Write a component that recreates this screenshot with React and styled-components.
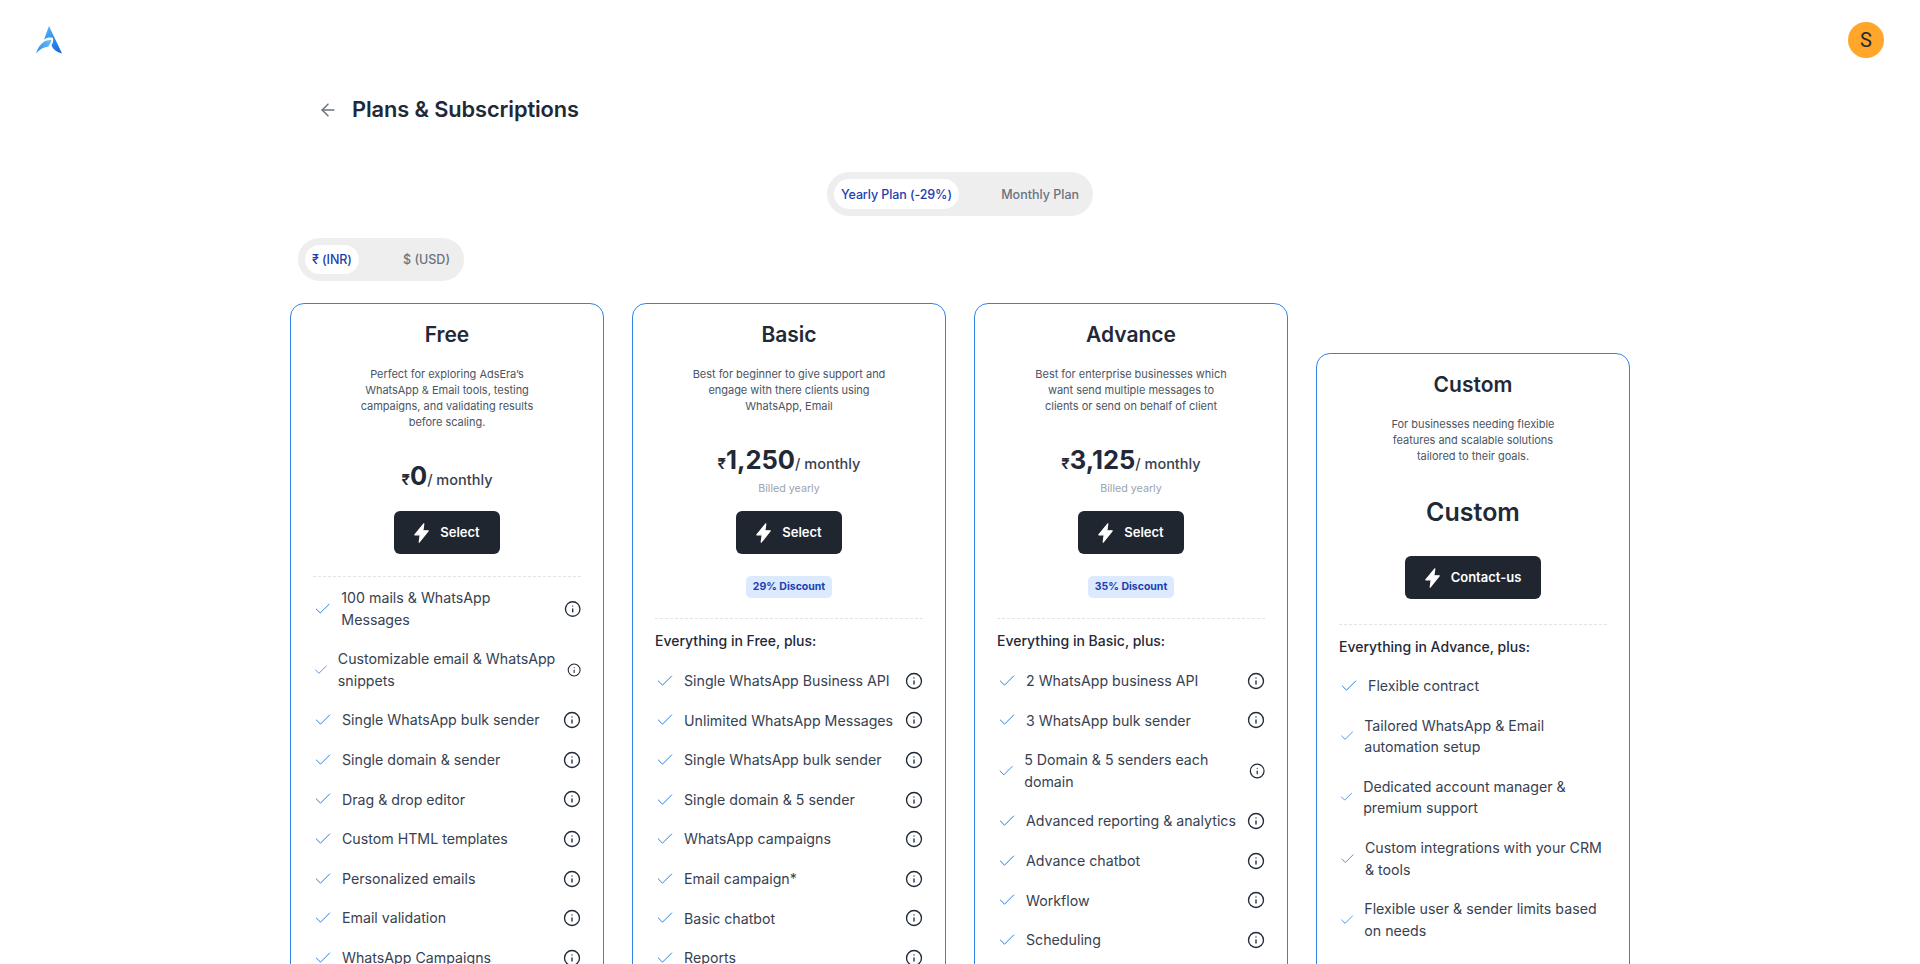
import styled, { createGlobalStyle } from 'styled-components';
import { ArrowLeft, Check, Info } from 'lucide-react';

const GlobalStyle = createGlobalStyle`
  html, body {
    margin: 0;
    height: 964px;
    overflow: hidden;
    background: #fff;
    font-family: Inter, "Noto Sans", sans-serif;
    color: #1f2937;
  }
  * { box-sizing: border-box; }
`;

const Header = styled.header`
  display: flex;
  justify-content: space-between;
  align-items: center;
  height: 80px;
  padding: 0 36px;
`;

const Avatar = styled.div`
  width: 36px;
  height: 36px;
  border-radius: 50%;
  background: #ffa62b;
  display: flex;
  align-items: center;
  justify-content: center;
  font-family: Roboto, sans-serif;
  font-size: 20px;
  color: #1f2937;
`;

const Main = styled.main`
  width: 1340px;
  margin: 0 auto;
`;

const TitleRow = styled.div`
  display: flex;
  align-items: center;
  gap: 14px;
  height: 33px;
  margin-top: 13px;
  padding-left: 28px;
  color: #6b7280;
`;

const Title = styled.h1`
  margin: 0;
  font-size: 21.8px;
  line-height: 33px;
  font-weight: 600;
  letter-spacing: -0.1px;
  color: #1f2937;
`;

const PlanToggleRow = styled.div`
  display: flex;
  justify-content: center;
  margin-top: 46px;
`;

const Toggle = styled.div`
  display: flex;
  align-items: center;
  justify-content: space-between;
  width: ${(p) => p.$width}px;
  height: ${(p) => p.$height}px;
  padding: 0 7px;
  border-radius: 22px;
  background: #eeeeee;
  margin-left: ${(p) => p.$left || 0}px;
`;

const ToggleOption = styled.div`
  display: flex;
  align-items: center;
  height: ${(p) => p.$height}px;
  padding: 0 7px;
  border-radius: 16px;
  font-size: 12.5px;
  font-weight: 500;
  letter-spacing: ${(p) => (p.$active ? '-0.1px' : '0')};
  background: ${(p) => (p.$active ? '#fff' : 'transparent')};
  color: ${(p) => (p.$active ? '#1e40af' : '#6b7280')};
`;

const CurrencyRow = styled.div`
  margin-top: 22px;
`;

const Cards = styled.div`
  display: grid;
  grid-template-columns: repeat(4, 314px);
  gap: 28px;
  align-items: start;
  margin-top: 22px;
`;

const Card = styled.section`
  min-height: 760px;
  margin-top: ${(p) => (p.$lowered ? 50 : 0)}px;
  padding: 16px 22px 24px;
  border: 1px solid #2f84e4;
  border-radius: 14px;
  background: #fff;
`;

const PlanName = styled.h2`
  margin: 0;
  font-size: 21px;
  line-height: 30px;
  font-weight: 600;
  text-align: center;
  color: #1f2937;
`;

const Description = styled.p`
  margin: 16px 0 25px;
  font-size: 11px;
  letter-spacing: -0.03px;
  line-height: 16px;
  text-align: center;
  color: #4b5563;
`;

const Price = styled.div`
  display: flex;
  justify-content: center;
  align-items: baseline;
  height: 42px;
  line-height: 42px;
  font-weight: 500;
  font-size: 14.5px;
  color: #374151;
`;

const Rupee = styled.span`
  font-size: 15px;
  font-weight: 600;
  color: #1f2937;
`;

const Amount = styled.span`
  font-size: 25.5px;
  font-weight: 700;
  color: #1f2937;
`;

const CustomPrice = styled.div`
  padding-top: 2px;
  font-size: 25px;
  line-height: 42px;
  font-weight: 600;
  text-align: center;
  color: #1f2937;
`;

const Billed = styled.div`
  height: 16px;
  font-size: 10.7px;
  line-height: 16px;
  text-align: center;
  color: #9ca3af;
`;

const ButtonRow = styled.div`
  display: flex;
  justify-content: center;
  margin-top: ${(p) => p.$top}px;
`;

const SelectButton = styled.button`
  display: flex;
  align-items: center;
  gap: 11px;
  height: 43px;
  padding: 0 20px 2px;
  border: none;
  border-radius: 6px;
  background: #1f2630;
  color: #fff;
  font-family: inherit;
  font-size: 13px;
  font-weight: 600;

  svg {
    margin-top: 2px;
  }
`;

const Badge = styled.div`
  width: fit-content;
  height: 22px;
  margin: 22px auto 0;
  padding: 0 7px;
  border-radius: 5px;
  background: #dbeafe;
  color: #1e40af;
  font-size: 10.5px;
  font-weight: 700;
  line-height: 22px;
`;

const Divider = styled.hr`
  margin: ${(p) => p.$top}px 0 0;
  border: none;
  border-top: 1px dashed #e2e4e8;
`;

const IncludesTitle = styled.div`
  margin-top: 11px;
  font-size: 14px;
  line-height: 22px;
  font-weight: 500;
  color: #1f2937;
`;

const FeatureList = styled.ul`
  display: flex;
  flex-direction: column;
  gap: 18px;
  margin: ${(p) => p.$top}px 0 0;
  padding: 0;
  list-style: none;
`;

const Feature = styled.li`
  display: flex;
  align-items: center;
  justify-content: space-between;
`;

const CheckMark = styled(Check)`
  flex: 0 1 20px;
  min-width: 0;
  margin-right: 9px;
  color: #1f7ae0;
`;

const FeatureText = styled.span`
  flex: 1 1 auto;
  margin-right: ${(p) => (p.$withInfo ? 8 : 0)}px;
  font-size: 14.2px;
  line-height: 21.6px;
  color: #374151;
`;

const InfoMark = styled(Info)`
  flex: 0 1 18px;
  min-width: 0;
  color: #1f2937;
`;

const Logo = () => (
  <svg width="26" height="28" viewBox="0 0 26 28">
    <defs>
      <linearGradient id="logoMain" x1="0.3" y1="0" x2="0.8" y2="1">
        <stop offset="0" stopColor="#4fb0f3" />
        <stop offset="1" stopColor="#1668dc" />
      </linearGradient>
      <linearGradient id="logoWing" x1="0" y1="1" x2="1" y2="0">
        <stop offset="0" stopColor="#2a86ea" />
        <stop offset="1" stopColor="#6cc0f7" />
      </linearGradient>
    </defs>
    <path d="M13 0 L26 27.5 C21 26 17.5 24 15.5 19.5 C17 16.5 17.5 14.5 17 12 C14 11 11 11.5 8 13.5 Z" fill="url(#logoMain)" />
    <path d="M0 27.5 C1.5 22.5 4 18.5 7.5 16 C10 14.5 13 13.8 15.5 14.2 C15 16.5 13.5 18.5 12.5 20.5 C8 20.8 3.5 23.5 0 27.5 Z" fill="url(#logoWing)" />
  </svg>
);

const Bolt = () => (
  <svg width="15" height="20" viewBox="0 0 15 20">
    <path
      d="M9.8 0.8 L0.8 11.8 H6.2 L5.2 19.2 L14.2 7.8 H8.8 Z"
      fill="#fff"
      stroke="#fff"
      strokeWidth="1.2"
      strokeLinejoin="round"
    />
  </svg>
);

const plans = [
  {
    name: 'Free',
    desc: ['Perfect for exploring AdsEra\u2019s', 'WhatsApp & Email tools, testing', 'campaigns, and validating results', 'before scaling.'],
    amount: '0',
    features: [
      '100 mails & WhatsApp Messages',
      'Customizable email & WhatsApp snippets',
      'Single WhatsApp bulk sender',
      'Single domain & sender',
      'Drag & drop editor',
      'Custom HTML templates',
      'Personalized emails',
      'Email validation',
      'WhatsApp Campaigns',
    ],
  },
  {
    name: 'Basic',
    desc: ['Best for beginner to give support and', 'engage with there clients using', 'WhatsApp, Email'],
    amount: '1,250',
    billed: true,
    discount: '29% Discount',
    includes: 'Everything in Free, plus:',
    features: [
      'Single WhatsApp Business API',
      'Unlimited WhatsApp Messages',
      'Single WhatsApp bulk sender',
      'Single domain & 5 sender',
      'WhatsApp campaigns',
      'Email campaign*',
      'Basic chatbot',
      'Reports',
    ],
  },
  {
    name: 'Advance',
    desc: ['Best for enterprise businesses which', 'want send multiple messages to', 'clients or send on behalf of client'],
    amount: '3,125',
    billed: true,
    discount: '35% Discount',
    includes: 'Everything in Basic, plus:',
    features: [
      '2 WhatsApp business API',
      '3 WhatsApp bulk sender',
      '5 Domain & 5 senders each domain',
      'Advanced reporting & analytics',
      'Advance chatbot',
      'Workflow',
      'Scheduling',
    ],
  },
  {
    name: 'Custom',
    lowered: true,
    noInfo: true,
    desc: ['For businesses needing flexible', 'features and scalable solutions', 'tailored to their goals.'],
    includes: 'Everything in Advance, plus:',
    action: 'Contact-us',
    features: [
      'Flexible contract',
      'Tailored WhatsApp & Email automation setup',
      'Dedicated account manager & premium support',
      'Custom integrations with your CRM & tools',
      'Flexible user & sender limits based on needs',
    ],
  },
];

function PlanCard({ plan }) {
  const dividerTop = plan.discount ? 20 : plan.amount ? 22 : 25;
  const listTop = !plan.includes ? 10 : plan.noInfo ? 17 : 18;
  return (
    <Card $lowered={plan.lowered}>
      <PlanName>{plan.name}</PlanName>
      <Description>
        {plan.desc.map((line) => (
          <div key={line}>{line}</div>
        ))}
      </Description>
      {plan.amount ? (
        <Price>
          <Rupee>₹</Rupee>
          <Amount>{plan.amount}</Amount>/ monthly
        </Price>
      ) : (
        <CustomPrice>Custom</CustomPrice>
      )}
      {plan.billed && <Billed>Billed yearly</Billed>}
      <ButtonRow $top={plan.amount ? 14 : 23}>
        <SelectButton>
          <Bolt />
          {plan.action || 'Select'}
        </SelectButton>
      </ButtonRow>
      {plan.discount && <Badge>{plan.discount}</Badge>}
      <Divider $top={dividerTop} />
      {plan.includes && <IncludesTitle>{plan.includes}</IncludesTitle>}
      <FeatureList $top={listTop}>
        {plan.features.map((text) => (
          <Feature key={text}>
            <CheckMark size={20} strokeWidth={1.15} />
            <FeatureText $withInfo={!plan.noInfo}>{text}</FeatureText>
            {!plan.noInfo && <InfoMark size={18} strokeWidth={1.8} />}
          </Feature>
        ))}
      </FeatureList>
    </Card>
  );
}

export default function App() {
  return (
    <>
      <GlobalStyle />
      <Header>
        <Logo />
        <Avatar>S</Avatar>
      </Header>
      <Main>
        <TitleRow>
          <ArrowLeft size={20} strokeWidth={1.8} />
          <Title>Plans &amp; Subscriptions</Title>
        </TitleRow>
        <PlanToggleRow>
          <Toggle $width={266} $height={44}>
            <ToggleOption $active $height={30}>Yearly Plan (-29%)</ToggleOption>
            <ToggleOption $height={30}>Monthly Plan</ToggleOption>
          </Toggle>
        </PlanToggleRow>
        <CurrencyRow>
          <Toggle $width={166} $height={43} $left={8}>
            <ToggleOption $active $height={29}>₹ (INR)</ToggleOption>
            <ToggleOption $height={29}>$ (USD)</ToggleOption>
          </Toggle>
        </CurrencyRow>
        <Cards>
          {plans.map((plan) => (
            <PlanCard key={plan.name} plan={plan} />
          ))}
        </Cards>
      </Main>
    </>
  );
}
